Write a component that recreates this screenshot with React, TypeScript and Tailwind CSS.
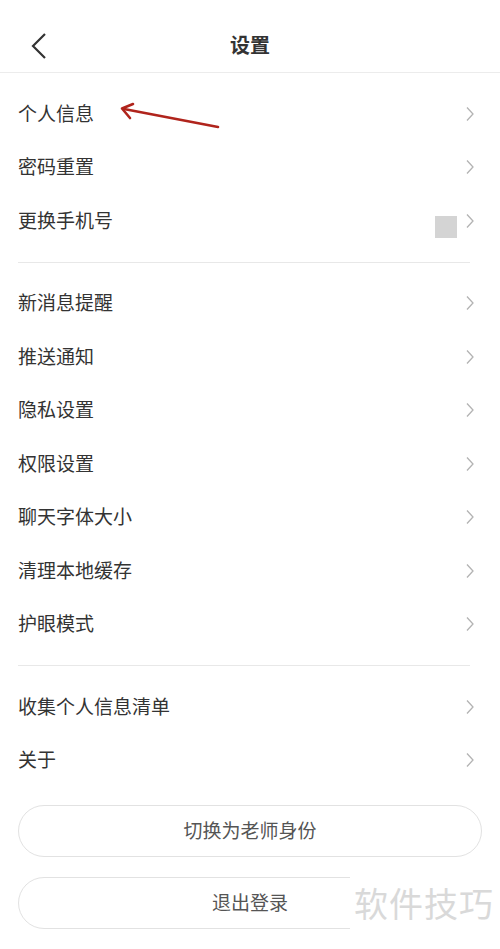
const groups: string[][] = [
  ["个人信息", "密码重置", "更换手机号"],
  ["新消息提醒", "推送通知", "隐私设置", "权限设置", "聊天字体大小", "清理本地缓存", "护眼模式"],
  ["收集个人信息清单", "关于"],
];

function Chevron() {
  return (
    <svg width="10" height="16" viewBox="0 0 10 16" className="shrink-0">
      <path d="M2 1.5 L8 8 L2 14.5" fill="none" stroke="#b3b3b3" strokeWidth="1.3" />
    </svg>
  );
}

function Row({ label }: { label: string }) {
  return (
    <div className="relative flex h-[53.5px] items-center justify-between pl-[18px] pr-[25px]">
      <span className="text-[19px] text-[#333]">{label}</span>
      {label === "更换手机号" && (
        <span className="absolute left-[435px] top-[22px] h-[22px] w-[22px] bg-[#d4d4d4]" />
      )}
      <Chevron />
    </div>
  );
}

export default function App() {
  return (
    <div
      className="relative h-[949px] w-[500px] overflow-hidden bg-white"
      style={{ fontFamily: '"Noto Sans", "Noto Sans CJK SC", sans-serif' }}
    >
      {/* header */}
      <div className="relative flex h-[73px] items-center justify-center border-b border-[#ececec] pt-[20px]">
        <svg width="20" height="28" viewBox="0 0 20 28" className="absolute left-[29px] top-[32px]">
          <path d="M16 2 L4 14 L16 26" fill="none" stroke="#333" strokeWidth="2.2" />
        </svg>
        <span className="text-[20px] font-bold text-[#333]">设置</span>
      </div>

      <div className="pt-[14px]">
        {groups.map((g, gi) => (
          <div key={gi}>
            {g.map((l) => (
              <Row key={l} label={l} />
            ))}
            {gi < groups.length - 1 && (
              <div className="py-[14px] pl-[18px] pr-[30px]">
                <div className="h-px bg-[#e8e8e8]" />
              </div>
            )}
          </div>
        ))}
      </div>

      <div className="flex flex-col gap-[20px] px-[18px] pt-[18px]">
        <div className="flex h-[52px] items-center justify-center rounded-full border border-[#e2e2e2] text-[19px] text-[#555]">
          切换为老师身份
        </div>
        <div className="flex h-[52px] items-center justify-center rounded-full border border-[#e2e2e2] text-[19px] text-[#555]">
          退出登录
        </div>
      </div>

      {/* watermark */}
      <div className="absolute left-[350px] top-[876px] flex h-[73px] w-[150px] items-start bg-white pl-[4px] pt-[7px]">
        <span className="text-[34px] leading-[42px] tracking-[1px] text-[#d9d9d9]">软件技巧</span>
      </div>

      {/* annotation arrow */}
      <svg width="500" height="949" className="pointer-events-none absolute left-0 top-0">
        <path d="M218 127 L124 109" stroke="#b0241c" strokeWidth="2.6" fill="none" strokeLinecap="round" />
        <path d="M133 104 L122 108.5 L130 118" stroke="#b0241c" strokeWidth="2.6" fill="none" strokeLinecap="round" strokeLinejoin="round" />
      </svg>
    </div>
  );
}
